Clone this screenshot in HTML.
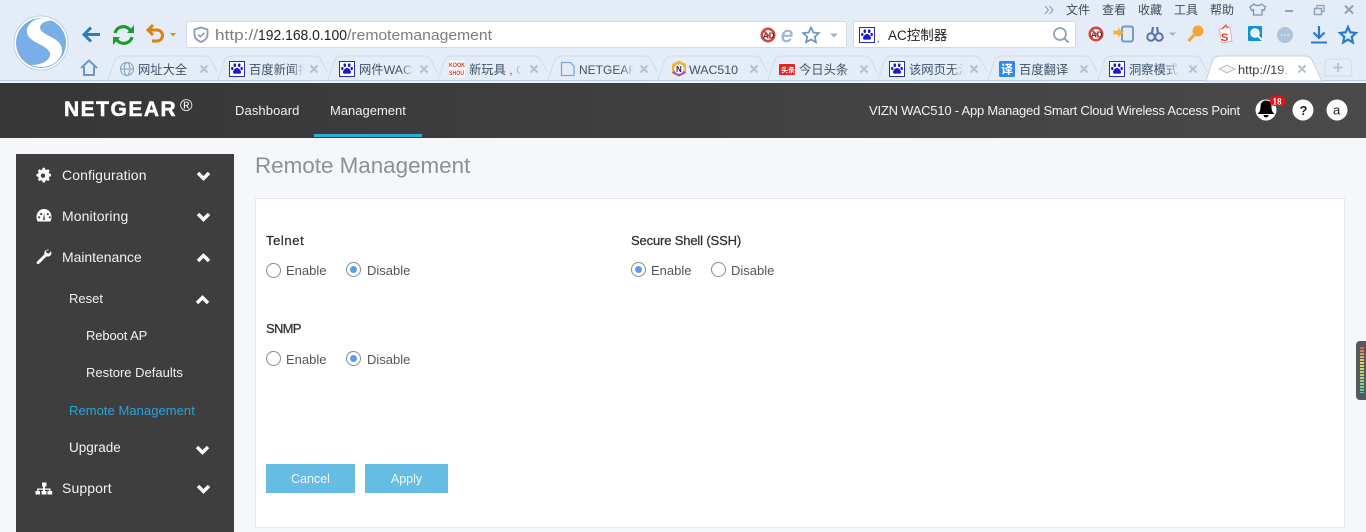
<!DOCTYPE html>
<html lang="zh">
<head>
<meta charset="utf-8">
<title>Remote Management</title>
<style>
html,body{margin:0;padding:0;width:1366px;height:532px;overflow:hidden;background:#f5f7fa;}
body{position:relative;font-family:"Liberation Sans","Noto Sans CJK SC",sans-serif;}
svg{position:absolute;display:block;}
.t{position:absolute;white-space:nowrap;line-height:20px;height:20px;}
#chrome{left:0;top:0;}
#chrome text{font-family:"Liberation Sans","Noto Sans CJK SC",sans-serif;}
#hdr{position:absolute;left:0;top:83px;width:1366px;height:55px;background:linear-gradient(90deg,#363636,#4a4a4a);}
#ind{position:absolute;left:314px;top:134px;width:108px;height:3px;background:#2aaed8;}
#side{position:absolute;left:16px;top:154px;width:218px;height:378px;background:#3e3e3e;}
.n{color:#f2f2f2;font-size:14px;}
.h{color:#f2f2f2;font-size:13px;}
#panel{position:absolute;left:255px;top:198px;width:1088px;height:328px;background:#fff;border:1px solid #e6e8eb;}
.l{color:#2f2f2f;font-size:13px;-webkit-text-stroke:.25px #2f2f2f;}
.o{color:#555;font-size:13px;}
.r{position:absolute;width:13px;height:13px;border:1px solid #8a8a8a;border-radius:50%;background:#fff;}
.r.c:after{content:"";position:absolute;left:3px;top:3px;width:7px;height:7px;border-radius:50%;background:#5b9bef;}
.b{position:absolute;top:464px;height:29px;background:#65bde3;color:#eef8fc;font-size:12.5px;line-height:31px;text-align:center;}
</style>
</head>
<body>
<svg id="chrome" width="1366" height="83" viewBox="0 0 1366 83">
<defs>
<symbol id="paw" viewBox="0 0 16 16">
<rect x=".5" y=".5" width="15" height="15" fill="#fff" stroke="#2a2ab0"/>
<g fill="#1a1ad0"><ellipse cx="5.800" cy="4.200" rx="1.300" ry="1.800"/><ellipse cx="10.200" cy="4.200" rx="1.300" ry="1.800"/><ellipse cx="3.300" cy="7.500" rx="1.200" ry="1.600"/><ellipse cx="12.700" cy="7.500" rx="1.200" ry="1.600"/><path d="M8 7c-2 0-4 2.500-4 4.300C4 13 6 13 8 12.500 10 13 12 13 12 11.300 12 9.500 10 7 8 7z"/></g>
</symbol>
<linearGradient id="fade" x1="0" x2="1"><stop offset="0" stop-color="#e4edf7" stop-opacity="0"/><stop offset=".55" stop-color="#e4edf7"/><stop offset="1" stop-color="#e4edf7"/></linearGradient>
<linearGradient id="fadew" x1="0" x2="1"><stop offset="0" stop-color="#fff" stop-opacity="0"/><stop offset=".6" stop-color="#fff"/><stop offset="1" stop-color="#fff"/></linearGradient>
<g id="x"><path d="M-3.500-3.500L3.500 3.500M3.500-3.500L-3.500 3.500" stroke="#b4c0cc" stroke-width="2"/></g>
<path id="tab" d="M0 80L6 62Q8 56 14 56L96 56Q102 56 104 62L109 72" fill="none" stroke="#d0dcea"/>
</defs>
<rect width="1366" height="83" fill="#e4edf7"/>
<circle cx="41" cy="43" r="27" fill="#fff" stroke="#bcd0e6"/>
<circle cx="41" cy="43" r="25" fill="#7aaee6"/>
<path d="M54 21C42 14 26 21 27 32c1 11 20 12 23 21 1 6-6 12-19 12 14 6 31-2 31-15 0-13-21-14-22-22 0-5 6-8 14-7z" fill="#fff"/>
<path d="M100 34.500H84M91 27.500L84 34.500 91 41.500" fill="none" stroke="#2a7cc6" stroke-width="3"/>
<path d="M115 33a8.500 8.500 0 0 1 15-3M132 37a8.500 8.500 0 0 1-15 3" fill="none" stroke="#1f9a2e" stroke-width="3.200"/>
<path d="M134 25v8h-7zM113 45v-8h7z" fill="#1f9a2e"/>
<path d="M149 30h8a5.500 5.500 0 0 1 0 11h-5" fill="none" stroke="#df7f10" stroke-width="3"/>
<path d="M153 25l-5 5 5 5" fill="none" stroke="#df7f10" stroke-width="3"/>
<path d="M170 33h6l-3 3.500z" fill="#df8a20"/>
<rect x="186.500" y="21.500" width="660" height="26" rx="2" fill="#fff" stroke="#cfdbe8"/>
<path d="M201 27.500l6.500 2v5.500c0 3.500-3 5.500-6.500 7-3.500-1.500-6.500-3.500-6.500-7v-5.500z" fill="none" stroke="#8a9cb4" stroke-width="1.800"/>
<path d="M198 34.500l2.300 2.300 4-4" fill="none" stroke="#8a9cb4" stroke-width="1.500"/>
<text x="215" y="40" font-size="15" fill="#7d7d7d" textLength="43" lengthAdjust="spacingAndGlyphs">http://</text>
<text x="258" y="40" font-size="15" fill="#222" textLength="89" lengthAdjust="spacingAndGlyphs">192.168.0.100</text>
<text x="347" y="40" font-size="15" fill="#7d7d7d" textLength="145" lengthAdjust="spacingAndGlyphs">/remotemanagement</text>
<circle cx="768" cy="35" r="7.500" fill="#d8453f"/><circle cx="768" cy="35" r="5" fill="#fff"/>
<text x="763" y="38.500" font-size="8" font-weight="bold" fill="#333">AD</text>
<path d="M763 30l10 10" stroke="#d8453f" stroke-width="1.800"/>
<text x="781" y="42" font-size="22" font-style="italic" fill="#9db6d6" stroke="#9db6d6" stroke-width=".5">e</text>
<path d="M811 27.500l2.300 5 5.500.6-4 3.700 1.100 5.400-4.900-2.700-4.900 2.700 1.100-5.400-4-3.700 5.500-.6z" fill="none" stroke="#6c92bd" stroke-width="1.700"/>
<path d="M830 33.500h8l-4 4z" fill="#a5b4c4"/>
<rect x="853.500" y="21.500" width="222" height="26" rx="2" fill="#fff" stroke="#cfdbe8"/>
<use href="#paw" x="859" y="27" width="16" height="16"/>
<path d="M879 40l-2.500 2.500h2.500z" fill="#8a9cb4"/>
<text x="888" y="40" font-size="13.500" fill="#222">AC控制器</text>
<circle cx="1060" cy="34" r="6" fill="none" stroke="#8ea3b8" stroke-width="1.800"/>
<path d="M1064.500 38.500l4 4" stroke="#8ea3b8" stroke-width="2"/>
<!-- top menu -->
<path d="M1045 6l3.500 4-3.500 4M1049.500 6l3.500 4-3.500 4" fill="none" stroke="#8a98a8"/>
<g font-size="12" fill="#3f4a58"><text x="1066" y="14">文件</text><text x="1102" y="14">查看</text><text x="1138" y="14">收藏</text><text x="1174" y="14">工具</text><text x="1210" y="14">帮助</text></g>
<path d="M1254 4l-4 3 1.500 3.500 2-.8V15h8.500V9.700l2 .8 1.500-3.500-4-3-2 1.500h-3.500z" fill="none" stroke="#7d94aa" stroke-width="1.300"/>
<path d="M1285 11h8" stroke="#8ea2b8" stroke-width="2"/>
<rect x="1314.500" y="8.500" width="7" height="6" fill="none" stroke="#8ea2b8" stroke-width="1.500"/>
<path d="M1317 8V5.500h7v6h-2" fill="none" stroke="#8ea2b8" stroke-width="1.300"/>
<path d="M1345 5.500l8 8M1353 5.500l-8 8" stroke="#8ea2b8" stroke-width="2"/>
<!-- toolbar right -->
<circle cx="1096" cy="34" r="7.500" fill="#d8453f"/><circle cx="1096" cy="34" r="5" fill="#fff"/>
<text x="1091" y="37.500" font-size="8" font-weight="bold" fill="#333">AD</text>
<path d="M1091 29l10 10" stroke="#d8453f" stroke-width="1.800"/>
<rect x="1122" y="26.500" width="11" height="15" rx="2" fill="none" stroke="#6d9cc8" stroke-width="2"/>
<path d="M1118 30.500v-3l5 5-5 5v-3h-4.500v-4z" fill="#f2b33a"/>
<circle cx="1151" cy="37" r="3.700" fill="none" stroke="#5a72a8" stroke-width="2"/><circle cx="1159" cy="37" r="3.700" fill="none" stroke="#5a72a8" stroke-width="2"/>
<path d="M1152 33l1-6M1158 33l-1-6" stroke="#5a72a8" stroke-width="2.200"/>
<path d="M1169 32.500h7l-3.500 3.500z" fill="#a5b4c4"/>
<circle cx="1198" cy="31" r="5.500" fill="#f2a637"/><path d="M1194 35l-5.500 6" stroke="#f2a637" stroke-width="3"/>
<path d="M1219 29l11-2 2 14-10 2z" fill="#fff" stroke="#e8a9a0"/>
<text x="1221" y="41" font-size="11" font-weight="bold" fill="#d9392c">S</text>
<path d="M1222 29l4-4 2 3" fill="none" stroke="#d9392c"/>
<rect x="1248" y="26" width="14" height="15" rx="1" fill="#0e93d4"/>
<circle cx="1255" cy="33" r="4" fill="#dff3fb" stroke="#fff" stroke-width="1.500"/>
<path d="M1258 36l4 4" stroke="#fff" stroke-width="2"/>
<circle cx="1285" cy="35" r="8" fill="#aec3de"/>
<path d="M1281 35h1.500M1284.300 35h1.500M1287.500 35h1.500" stroke="#e8eff7" stroke-width="1.500"/>
<path d="M1319 26v12M1313.500 32.500l5.500 5.500 5.500-5.500" fill="none" stroke="#2a7cc6" stroke-width="2.200"/>
<path d="M1311 42.500h16" stroke="#2a7cc6" stroke-width="2"/>
<path d="M1348 27l2.300 5.300 5.700.6-4.300 3.900 1.200 5.700-4.900-3-4.900 3 1.200-5.700-4.300-3.900 5.700-.6z" fill="none" stroke="#2a7cc6" stroke-width="2.200"/>
<!-- home -->
<path d="M81 68l8-7.500 8 7.500M84 66.500V75h10v-8.500" fill="none" stroke="#6d97c4" stroke-width="2"/>
<!-- tabs -->
<use href="#tab" x="108"/><use href="#tab" x="218"/><use href="#tab" x="328"/><use href="#tab" x="438"/><use href="#tab" x="548"/><use href="#tab" x="658"/><use href="#tab" x="768"/><use href="#tab" x="878"/><use href="#tab" x="988"/><use href="#tab" x="1098"/>
<rect x="0" y="80" width="1366" height="1" fill="#bfccda"/>
<rect x="0" y="81" width="1366" height="2" fill="#edf2f8"/>
<path d="M1206 81L1212 62Q1214 56 1220 56L1305 56Q1311 56 1313 62L1322 81z" fill="#fff" stroke="#c4d2e2"/>
<path d="M1324 76l1.500-14Q1326 59 1329 59H1348Q1351 59 1351 62L1352 76z" fill="none" stroke="#d0dcea"/>
<path d="M1338 63v9M1333.500 67.500h9" stroke="#b4c3d2" stroke-width="2"/>
<!-- tab icons -->
<g fill="none" stroke="#90a8c4" stroke-width="1.200"><circle cx="127" cy="69" r="6.500"/><ellipse cx="127" cy="69" rx="2.800" ry="6.500"/><path d="M120.500 69h13"/></g>
<use href="#paw" x="229" y="61" width="16" height="16"/>
<use href="#paw" x="339" y="61" width="16" height="16"/>
<rect x="449" y="61" width="16" height="16" fill="#fff"/>
<text x="449" y="67" font-size="6" font-weight="bold" fill="#d9392c" textLength="16" lengthAdjust="spacingAndGlyphs">KOOK</text>
<text x="449" y="75" font-size="6" font-weight="bold" fill="#d9392c" textLength="15" lengthAdjust="spacingAndGlyphs">SHOU</text>
<path d="M561.500 62.500h9l3.500 3.500v9.500h-12.500z" fill="none" stroke="#7ca6d6" stroke-width="1.300"/>
<path d="M672 64l7-3.500 7 3.500v9l-7 3.500-7-3.500z" fill="#f2b53a"/>
<path d="M672 73l7 3.500 7-3.500-3-3h-8z" fill="#a14dbb"/>
<circle cx="679" cy="69" r="4.800" fill="#fff"/>
<text x="676" y="72" font-size="8" font-weight="bold" fill="#225">N</text>
<rect x="779" y="64" width="16" height="11" rx="1" fill="#e0251f"/>
<text x="781" y="72.500" font-size="7" font-weight="bold" fill="#fff">头条</text>
<use href="#paw" x="889" y="61" width="16" height="16"/>
<rect x="999" y="61" width="16" height="16" rx="1.500" fill="#2a8ce8"/>
<text x="1001" y="73.500" font-size="12" font-weight="bold" fill="#fff">译</text>
<use href="#paw" x="1109" y="61" width="16" height="16"/>
<path d="M1219 69l8-4 8 4-8 4z" fill="#f2f4f6" stroke="#b5bdc6"/>
<!-- tab text -->
<g font-size="12.300" fill="#3f5268">
<text x="138" y="74">网址大全</text>
<text x="249" y="74">百度新闻搜</text>
<text x="359" y="74">网件WAC</text>
<text x="469" y="74">新玩具 , C</text>
<text x="579" y="74" textLength="58" lengthAdjust="spacingAndGlyphs">NETGEAR</text>
<text x="689" y="74" textLength="49" lengthAdjust="spacingAndGlyphs">WAC510</text>
<text x="799" y="74">今日头条</text>
<text x="909" y="74">该网页无法</text>
<text x="1019" y="74">百度翻译</text>
<text x="1129" y="74">洞察模式_</text>
<text x="1238" y="74" fill="#3a3a3a" textLength="50" lengthAdjust="spacingAndGlyphs">http://19.</text>
</g>
<!-- tab text fades -->
<rect x="291" y="60" width="24" height="18" fill="url(#fade)"/>
<rect x="401" y="60" width="24" height="18" fill="url(#fade)"/>
<rect x="509" y="60" width="24" height="18" fill="url(#fade)"/>
<rect x="621" y="60" width="24" height="18" fill="url(#fade)"/>
<rect x="951" y="60" width="24" height="18" fill="url(#fade)"/>
<rect x="1166" y="60" width="24" height="18" fill="url(#fade)"/>
<rect x="1278" y="60" width="24" height="18" fill="url(#fadew)"/>
<!-- close icons -->
<use href="#x" x="204" y="69"/><use href="#x" x="314" y="69"/><use href="#x" x="424" y="69"/><use href="#x" x="534" y="69"/><use href="#x" x="644" y="69"/><use href="#x" x="754" y="69"/><use href="#x" x="864" y="69"/><use href="#x" x="974" y="69"/><use href="#x" x="1084" y="69"/><use href="#x" x="1193" y="69"/><use href="#x" x="1302" y="69"/>
</svg>

<header id="hdr"></header>
<div class="t" style="left:64px;top:100px;font-size:21px;font-weight:bold;color:#fff;letter-spacing:1.500px;-webkit-text-stroke:.5px #fff;">NETGEAR</div>
<div class="t" style="left:180px;top:96px;font-size:17px;color:#fff;">®</div>
<div class="t h" style="left:235px;top:101px;letter-spacing:.1px;">Dashboard</div>
<div class="t h" style="left:330px;top:101px;">Management</div>
<div id="ind"></div>
<div class="t h" style="left:869px;top:101px;letter-spacing:-.22px;">VIZN WAC510 - App Managed Smart Cloud Wireless Access Point</div>
<svg style="left:1250px;top:92px;" width="100" height="32" viewBox="0 0 100 32">
<circle cx="16" cy="18" r="10.500" fill="#fff"/>
<path d="M16 8.500c-4 0-5.500 3-5.500 6.500 0 4-1.500 5.500-3 7h17c-1.500-1.500-3-3-3-7 0-3.500-1.500-6.500-5.500-6.500zM13.500 23a2.500 2.500 0 0 0 5 0z" fill="#000"/>
<rect x="19.500" y="4" width="16" height="10" rx="5" fill="#e8101a"/>
<text x="22.500" y="12.500" font-size="9" fill="#fff" font-family="Liberation Serif,serif" font-weight="bold">18</text>
<circle cx="53" cy="18" r="10.500" fill="#fff"/>
<text x="49.500" y="23" font-size="13" font-weight="bold" fill="#222" font-family="Liberation Sans,sans-serif">?</text>
<circle cx="87" cy="18" r="10.500" fill="#fff"/>
<text x="83" y="22.500" font-size="13" fill="#222" font-family="Liberation Sans,sans-serif">a</text>
</svg>

<nav id="side"></nav>
<svg style="left:16px;top:154px;" width="218" height="378" viewBox="0 0 218 378">
<g fill="#fff">
<path d="M27 15.200l1.500.2.500 1.600 1.400.6 1.400-.8 1.100 1.100-.8 1.400.6 1.400 1.600.5v1.600l-1.600.5-.6 1.400.8 1.400-1.100 1.100-1.400-.8-1.400.6-.5 1.600h-1.600l-.5-1.600-1.400-.6-1.400.8-1.100-1.100.8-1.400-.6-1.400-1.600-.5v-1.600l1.600-.5.6-1.400-.8-1.400 1.100-1.100 1.400.8 1.400-.6.5-1.600zm0 5a2.300 2.300 0 1 0 0 4.600 2.300 2.300 0 0 0 0-4.600z" transform="translate(0,-1) translate(-1.900,-1.400) scale(1.070)" stroke="#fff" stroke-width=".5"/>
<path fill-rule="evenodd" d="M28 55c-4.500 0-7.500 3.600-7.500 8 0 2 .5 3.300 1.200 4.500h12.600c.7-1.200 1.200-2.500 1.200-4.500 0-4.400-3-8-7.500-8zm-4.800 7.200a1.100 1.100 0 1 1 0 2.200 1.100 1.100 0 0 1 0-2.200zm2-3.200a1.100 1.100 0 1 1 0 2.200 1.100 1.100 0 0 1 0-2.200zm3.600 7h-1.800l.3-2 .8-5 .6 5zm3-7a1.100 1.100 0 1 1 0 2.200 1.100 1.100 0 0 1 0-2.200zm2 3.200a1.100 1.100 0 1 1 0 2.200 1.100 1.100 0 0 1 0-2.200z"/>
<path d="M33.500 96c-2.200-1-4.900.2-5.200 2.800l.2 1.500-7.500 7.300c-1.300 1.300.8 3.400 2.100 2.100l7.500-7.300 1.600.2c2.700-.3 3.800-2.900 2.800-5.200l-2.400 2.200-2.100-.7-.6-2.100z"/>
<path d="M25 328.500h4.500v4H28v2h5.500v2.500h1.700v3.500h-4.700V337h1.500v-1.200H28v1.200h1.500v3.500h-5V337H26v-1.200h-4.500v1.200h1.500v3.500h-4.500V337h1.700v-2.500H26v-2h-1z" transform="translate(1,0)"/>
</g>
<g fill="none" stroke="#fff" stroke-width="3.400">
<path d="M182 19l5.500 5.500 5.500-5.500"/>
<path d="M182 60l5.500 5.500 5.500-5.500"/>
<path d="M182 107l5.500-5.500 5.500 5.500"/>
<path d="M181 149l5.500-5.500 5.500 5.500"/>
<path d="M181 293l5.500 5.500 5.500-5.500"/>
<path d="M182 332l5.500 5.500 5.500-5.500"/>
</g>
</svg>
<div class="t n" style="left:62px;top:165px;letter-spacing:.1px;">Configuration</div>
<div class="t n" style="left:62px;top:206px;letter-spacing:.1px;">Monitoring</div>
<div class="t n" style="left:62px;top:247px;letter-spacing:-.05px;">Maintenance</div>
<div class="t n" style="left:69px;top:289px;font-size:13px;">Reset</div>
<div class="t n" style="left:86px;top:326px;font-size:13px;letter-spacing:-.1px;">Reboot AP</div>
<div class="t n" style="left:86px;top:363px;font-size:13px;">Restore Defaults</div>
<div class="t n" style="left:69px;top:401px;font-size:13px;letter-spacing:.05px;color:#2ba3d8;">Remote Management</div>
<div class="t n" style="left:69px;top:438px;font-size:13.500px;">Upgrade</div>
<div class="t n" style="left:62px;top:478px;letter-spacing:.1px;">Support</div>

<div class="t" style="left:255px;top:156px;font-size:22.400px;color:#8e9194;line-height:20px;">Remote Management</div>
<main id="panel"></main>
<div class="t l" style="left:266px;top:231px;letter-spacing:.6px;">Telnet</div>
<div class="r" style="left:266px;top:263px;"></div><div class="t o" style="left:286px;top:261px;">Enable</div>
<div class="r c" style="left:346px;top:262px;"></div><div class="t o" style="left:367px;top:261px;">Disable</div>
<div class="t l" style="left:631px;top:231px;letter-spacing:-.15px;">Secure Shell (SSH)</div>
<div class="r c" style="left:631px;top:262px;"></div><div class="t o" style="left:651px;top:261px;">Enable</div>
<div class="r" style="left:711px;top:262px;"></div><div class="t o" style="left:731px;top:261px;">Disable</div>
<div class="t l" style="left:266px;top:319px;letter-spacing:-.7px;">SNMP</div>
<div class="r" style="left:266px;top:351px;"></div><div class="t o" style="left:286px;top:350px;">Enable</div>
<div class="r c" style="left:346px;top:351px;"></div><div class="t o" style="left:367px;top:350px;">Disable</div>
<div class="b" style="left:266px;width:89px;">Cancel</div>
<div class="b" style="left:365px;width:83px;">Apply</div>

<svg style="left:1356px;top:341px;" width="10" height="60" viewBox="0 0 10 60">
<defs><linearGradient id="lv" x1="0" y1="0" x2="0" y2="1"><stop offset="0" stop-color="#d8606a"/><stop offset=".35" stop-color="#e6d460"/><stop offset=".7" stop-color="#9ed878"/><stop offset="1" stop-color="#5cc8b0"/></linearGradient>
<pattern id="bars" width="10" height="3" patternUnits="userSpaceOnUse"><rect width="10" height="2" fill="#fff"/></pattern>
<mask id="bm" maskUnits="userSpaceOnUse" x="0" y="0" width="10" height="60"><rect x="0" y="0" width="10" height="60" fill="url(#bars)"/></mask></defs>
<rect x="0" y="0" width="14" height="59" rx="4" fill="#55585c"/>
<rect x="4" y="6" width="4" height="46" fill="url(#lv)" mask="url(#bm)"/>
</svg>
</body>
</html>
